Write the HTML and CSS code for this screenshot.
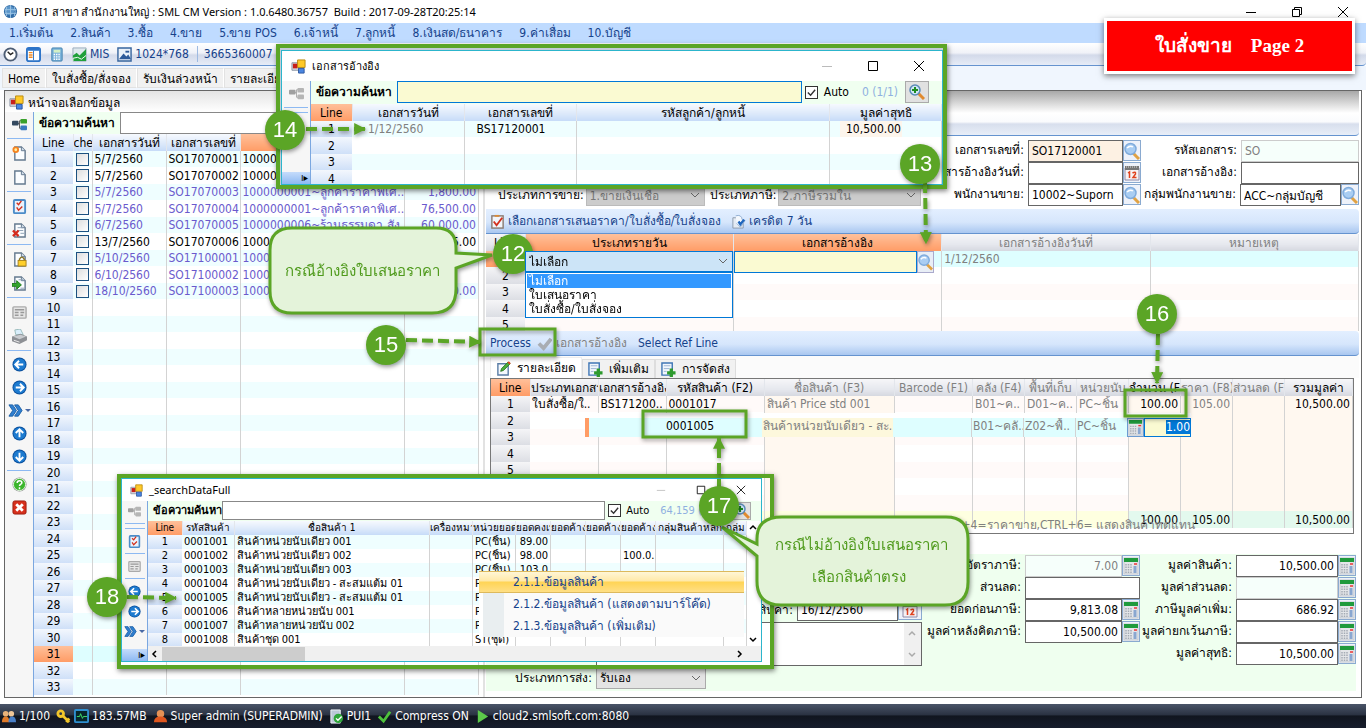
FILE: index.html
```html
<!doctype html>
<html lang="th">
  <head>
    <meta charset="UTF-8" />
    <meta name="viewport" content="width=device-width, initial-scale=1.0" />
    <title>SML CM - ใบสั่งขาย</title>
    <link rel="stylesheet" href="styles.css">
  </head>
  <body>
    <!-- icon sprite -->
    <svg class="sprite" width="0" height="0" aria-hidden="true">
      <symbol id="i-form" viewBox="0 0 16 16"><path d="M1 4h7v8H1z" fill="#d8dde6" stroke="#8a93a3"/><path d="M2 5h5v5H2z" fill="#c8201c"/><path d="M7 1h8v8H7z" fill="#ffc928" stroke="#b98a10"/><path d="M8 10h6v5H8z" fill="#4a86e0" stroke="#2c56a0"/></symbol>
      <symbol id="i-globe" viewBox="0 0 16 16"><circle cx="8" cy="8" r="7" fill="#2f6ba6"/><circle cx="7" cy="7" r="5" fill="#5b95c9"/><path d="M2 6h12M2 10h12M8 1v14M4 3q-2 5 0 10M12 3q2 5 0 10" stroke="#9cc4e4" fill="none"/></symbol>
      <symbol id="i-clock" viewBox="0 0 16 16"><circle cx="8" cy="8" r="6.5" fill="#fff" stroke="#4d5d74" stroke-width="2"/><path d="M5 5l3 3 3-2" stroke="#222" stroke-width="1.500" fill="none"/></symbol>
      <symbol id="i-layout" viewBox="0 0 16 16"><rect x="1" y="1" width="14" height="14" rx="2" fill="#fff" stroke="#2d74c8" stroke-width="2"/><path d="M2 3h12" stroke="#2d74c8" stroke-width="2"/><path d="M3 6h4M3 8.500h4M3 11h4" stroke="#f08a24" stroke-width="1.500"/><path d="M8 4v10" stroke="#2d74c8"/></symbol>
      <symbol id="i-calc" viewBox="0 0 16 16"><rect x="1" y="0" width="14" height="16" fill="#e4e6e9" stroke="#c3c8ce"/><path d="M1 0h14v4H1z" fill="#1f9a3c"/><path d="M3 6v9M5.500 6v9M8 6v9" stroke="#a4abb4" stroke-width="1.500" stroke-dasharray="1.500 1"/><path d="M12 8v7" stroke="#8aa7d0" stroke-width="3"/><path d="M11 6h3" stroke="#e33" stroke-width="1.500"/></symbol>
      <symbol id="i-calc2" viewBox="0 0 16 16"><rect x="3" y="1" width="11" height="14" rx="1" fill="#7fb5dc" stroke="#3c7eac"/><path d="M5 3h7v3H5z" fill="#d3f0c4"/><path d="M5 8h7M5 10.500h7M5 13h7" stroke="#fff" stroke-width="1.500" stroke-dasharray="1.500 1"/></symbol>
      <symbol id="i-chart" viewBox="0 0 16 16"><path d="M1 1h14v14H1z" fill="#dfe9ee" stroke="#9ab"/><path d="M1 15V9l4-3 3 3 7-7v13z" fill="#1fa03a"/><path d="M1 15v-3l5-1 4 2 5-4" fill="none" stroke="#fff"/></symbol>
      <symbol id="i-image" viewBox="0 0 16 16"><path d="M1 1h14v14H1z" fill="#eaf1fa" stroke="#37659e" stroke-width="1.500"/><path d="M2 13l5-6 3 3 2-2 3 5z" fill="#2d5a9a"/><path d="M9 4h4v2H9z" fill="#2d5a9a"/></symbol>
      <symbol id="i-share" viewBox="0 0 16 16"><path d="M5 7h3M8 4v8M8 4h2M8 12h2" stroke="#555" fill="none"/><rect x="0" y="4" width="7" height="5" rx="1" fill="#33495f"/><rect x="9" y="2" width="7" height="5" rx="1" fill="#3aa12c"/><rect x="9" y="9" width="7" height="5" rx="1" fill="#3a7ac0"/></symbol>
      <symbol id="i-share-off" viewBox="0 0 16 16"><path d="M5 7h3M8 4v8M8 4h2M8 12h2" stroke="#aaa" fill="none"/><rect x="0" y="4" width="7" height="5" rx="1" fill="#a0a0a0"/><rect x="9" y="2" width="7" height="5" rx="1" fill="#b5b5b5"/><rect x="9" y="9" width="7" height="5" rx="1" fill="#b5b5b5"/></symbol>
      <symbol id="i-page" viewBox="0 0 16 16"><path d="M3 1h7l4 4v10H3z" fill="#fbfdff" stroke="#64798f" stroke-width="1.500"/><path d="M10 1v4h4" fill="#d4dfea" stroke="#64798f"/></symbol>
      <symbol id="i-new" viewBox="0 0 16 16"><use href="#i-page"/><circle cx="4" cy="4" r="3.500" fill="#f58220"/><circle cx="4" cy="4" r="1.500" fill="#fff0a0"/></symbol>
      <symbol id="i-check" viewBox="0 0 16 16"><rect x="2" y="1" width="12" height="14" rx="1" fill="#e9f2fc" stroke="#4b8cc8" stroke-width="2"/><path d="M5 4l2 2 3-4M5 9l2 3 4-4" stroke="#d3301c" stroke-width="1.500" fill="none"/></symbol>
      <symbol id="i-del" viewBox="0 0 16 16"><use href="#i-page"/><path d="M6 5h6M6 8h6M9 11h4" stroke="#8da0b4"/><path d="M1 8l6 6M7 8l-6 6" stroke="#d52b1e" stroke-width="2.500"/></symbol>
      <symbol id="i-lock" viewBox="0 0 16 16"><use href="#i-page"/><path d="M8 9v-1.500q2.500-4 5 0V9" stroke="#8c7423" fill="none" stroke-width="1.500"/><rect x="6.500" y="9" width="8.500" height="6" fill="#ffd02b" stroke="#a8821a"/></symbol>
      <symbol id="i-go" viewBox="0 0 16 16"><use href="#i-page"/><path d="M7 4h5M9 13h4" stroke="#8da0b4"/><path d="M0 8h5V5l5 4.500-5 4.500v-3H0z" fill="#34a52d" stroke="#1f7a1a"/></symbol>
      <symbol id="i-props" viewBox="0 0 16 16"><rect x="1" y="2" width="14" height="12" rx="1" fill="#e6e6e6" stroke="#aaa" stroke-width="1.500"/><path d="M3 5h10M3 8h4M3 11h4M9 8h4M9 11h3" stroke="#999" stroke-width="1.500"/></symbol>
      <symbol id="i-print" viewBox="0 0 16 16"><path d="M3 1l6-1 3 6H4z" fill="#d9eefb" stroke="#9bb"/><path d="M0 8l9-3 7 3v4l-8 4-8-3z" fill="#8d9095"/><path d="M1 8l8-2 6 2-7 3z" fill="#c9ccd0"/><path d="M2 12l6 2" stroke="#eee"/></symbol>
      <symbol id="i-arrow" viewBox="0 0 16 16"><circle cx="8" cy="8" r="7.500" fill="#0b4f9c"/><circle cx="8" cy="8" r="6.500" fill="#1d7bd0"/><path d="M4 8h8M8.500 4L12.500 8l-4 4" stroke="#fff" stroke-width="2" fill="none"/></symbol>
      <symbol id="i-ff" viewBox="0 0 16 16"><path d="M1 2h4l4 6-4 6H1l4-6zM7 2h4l4 6-4 6H7l4-6z" fill="#2f7fd0" stroke="#1b5ea5"/></symbol>
      <symbol id="i-help" viewBox="0 0 16 16"><circle cx="8" cy="8" r="7.500" fill="#888"/><circle cx="8" cy="8" r="6.500" fill="#3cb52d" stroke="#e8ffe4"/><path d="M5.500 6.500q0-2.500 2.500-2.500t2.500 2q0 1-1.500 2-1 .6-1 1.500M8 11v2" stroke="#fff" stroke-width="1.600" fill="none"/></symbol>
      <symbol id="i-close" viewBox="0 0 16 16"><rect x="1" y="1" width="14" height="14" rx="2" fill="#d7301c" stroke="#9c1c0e"/><path d="M4.500 4.500l7 7M11.500 4.500l-7 7" stroke="#fff" stroke-width="3"/></symbol>
      <symbol id="i-mag" viewBox="0 0 16 16"><path d="M9 10l6 6" stroke="#e0a243" stroke-width="3"/><circle cx="6.500" cy="6" r="5.500" fill="#a9cdf2" stroke="#7fabdc" stroke-width="1.500"/><path d="M3 5q3-3 6-1" stroke="#fff" stroke-width="1.500" fill="none"/></symbol>
      <symbol id="i-magplus" viewBox="0 0 16 16"><path d="M9 9l6 6" stroke="#e08a2e" stroke-width="3"/><circle cx="6" cy="6" r="5" fill="#cfe6f7" stroke="#5a8ab8" stroke-width="1.500"/><path d="M6 3v6M3 6h6" stroke="#1d8c22" stroke-width="2"/></symbol>
      <symbol id="i-cal" viewBox="0 0 16 16"><path d="M1 3h14v12H1z" fill="#f7f2f4" stroke="#8e8aa8"/><path d="M1 1h14v4H1z" fill="#777"/><path d="M2 2h12" stroke="#ddd" stroke-dasharray="1 1"/><path d="M4 8l1.500-1v6M8.500 8q3.500-2 3 1L9 12.500h3.500" stroke="#e0421f" stroke-width="1.500" fill="none"/></symbol>
      <symbol id="i-pick" viewBox="0 0 16 16"><rect x="2" y="2" width="12" height="13" fill="#f2f5fa" stroke="#8a7a70" stroke-width="1.500"/><path d="M5 1h5v2H5z" fill="#d98b3a"/><path d="M4 8l3 4 6-8" stroke="#d3301c" stroke-width="2" fill="none"/></symbol>
      <symbol id="i-credit" viewBox="0 0 16 16"><path d="M2 4h8l3 4v7H2z" fill="#e4ebf4" stroke="#8c9aac"/><path d="M5 2q6-2 7 4l3 1-5 7-4-4" fill="#f4f8fd" stroke="#8cabd0"/><path d="M8 8l2 3 4-5" fill="none" stroke="#1f66bd" stroke-width="2.500"/></symbol>
      <symbol id="i-edit" viewBox="0 0 16 16"><path d="M2 3h11v12H2z" fill="#f4f8fd" stroke="#5b7ea6" stroke-width="1.500"/><path d="M5 11l1-3 7-7 2 2-7 7z" fill="#4cae3c" stroke="#2c7a22"/><path d="M13 1l2 2" stroke="#e0421f" stroke-width="2"/></symbol>
      <symbol id="i-add" viewBox="0 0 16 16"><path d="M1 1h11v13H1z" fill="#f1f6fc" stroke="#3f76b5" stroke-width="1.500"/><path d="M3 4h7M3 7h6M3 10h3" stroke="#9ab4d4"/><path d="M11 7v9M6.500 11.500h9" stroke="#2e9a2e" stroke-width="3.500"/></symbol>
      <symbol id="i-tick-off" viewBox="0 0 16 16"><path d="M2 8l5 5L15 3" stroke="#a9adb3" stroke-width="4" fill="none"/></symbol>
      <symbol id="i-users" viewBox="0 0 16 16"><circle cx="5" cy="5" r="3" fill="#e8b27a"/><path d="M1 14q0-6 4-6t4 6z" fill="#e07a28"/><circle cx="11" cy="5" r="3" fill="#f0c697"/><path d="M8 14q0-6 4-6t4 6z" fill="#4a80c8"/></symbol>
      <symbol id="i-user" viewBox="0 0 16 16"><circle cx="8" cy="5" r="4" fill="#e59155"/><path d="M1 14q0-6 7-6t7 6z" fill="#e0561e"/></symbol>
      <symbol id="i-key" viewBox="0 0 16 16"><circle cx="5" cy="5" r="3" fill="none" stroke="#f2c62a" stroke-width="3"/><path d="M7 7l7 7M11 14l3-4" stroke="#f2c62a" stroke-width="3"/></symbol>
      <symbol id="i-mon" viewBox="0 0 16 16"><rect x="1" y="1" width="14" height="13" rx="1" fill="#07262a" stroke="#2f8fd0" stroke-width="2"/><path d="M3 8h3l1-3 2 5 1-2h4" stroke="#3fe06a" fill="none"/></symbol>
      <symbol id="i-db" viewBox="0 0 16 16"><path d="M2 1h10v14H2z" fill="#bcc8d8" stroke="#f2f5fa"/><circle cx="10" cy="10" r="5" fill="#2fa53a"/><path d="M7.500 10l2 2 4-4" stroke="#fff" stroke-width="1.500" fill="none"/></symbol>
      <symbol id="i-tick" viewBox="0 0 16 16"><path d="M2 8l5 5L14 3" stroke="#4fc23c" stroke-width="3" fill="none"/></symbol>
      <symbol id="i-play" viewBox="0 0 16 16"><path d="M3 1l11 7-11 7z" fill="#5cc94a"/></symbol>
      <symbol id="i-min" viewBox="0 0 12 12"><path d="M1 6.500h10" stroke="currentColor"/></symbol>
      <symbol id="i-max" viewBox="0 0 12 12"><path d="M1.500 1.500h9v9h-9z" fill="none" stroke="currentColor"/></symbol>
      <symbol id="i-restore" viewBox="0 0 12 12"><path d="M1.500 3.500h7v7h-7zM3.500 3V1.500h7v7H9" fill="none" stroke="currentColor"/></symbol>
      <symbol id="i-x" viewBox="0 0 12 12"><path d="M1 1l10 10M11 1L1 11" stroke="currentColor"/></symbol>
      <symbol id="i-chev" viewBox="0 0 12 12"><path d="M3 4l3 3 3-3" fill="none" stroke="currentColor" stroke-width="1.500"/></symbol>
    </svg>

    <header class="title-bar">
      <svg class="icon"><use href="#i-globe"/></svg>
      <span>PUI1 สาขา สำนักงานใหญ่ : SML CM Version : 1.0.6480.36757 &nbsp;Build : 2017-09-28T20:25:14</span>
      <div class="win-buttons">
        <button title="Minimize"><svg><use href="#i-min"/></svg></button>
        <button title="Restore"><svg><use href="#i-restore"/></svg></button>
        <button title="Close"><svg><use href="#i-x"/></svg></button>
      </div>
    </header>

    <nav class="menu-bar">
      <a href="#">1.เริ่มต้น</a><a href="#">2.สินค้า</a><a href="#">3.ซื้อ</a><a href="#">4.ขาย</a><a href="#">5.ขาย POS</a><a href="#">6.เจ้าหนี้</a><a href="#">7.ลูกหนี้</a><a href="#">8.เงินสด/ธนาคาร</a><a href="#">9.ค่าเสื่อม</a><a href="#">10.บัญชี</a>
    </nav>

    <div class="main-tools">
      <button title="Clock"><svg class="icon"><use href="#i-clock"/></svg></button>
      <button title="Layout"><svg class="icon"><use href="#i-layout"/></svg></button>
      <button title="Calculator"><svg class="icon"><use href="#i-calc2"/></svg></button>
      <button><svg class="icon"><use href="#i-chart"/></svg>MIS</button>
      <button><svg class="icon"><use href="#i-image"/></svg>1024*768</button>
      <span class="code">3665360007</span>
      <span>POS Changsiam Call Center Code : 3665360007-001(สำนักงานใหญ่)</span>
    </div>

    <nav class="doc-tabs">
      <a href="#">Home</a><a href="#">ใบสั่งซื้อ/สั่งจอง</a><a href="#">รับเงินล่วงหน้า</a><a href="#">รายละเอียด</a>
    </nav>

    <main class="workspace">
      <section class="list-pane">
        <div class="pane-title"><svg class="icon"><use href="#i-form"/></svg>หน้าจอเลือกข้อมูล</div>
        <div class="pane-body">
          <div class="side-tools">
            <button title="Link"><svg class="icon"><use href="#i-share"/></svg></button>
            <hr>
            <button title="New"><svg class="icon"><use href="#i-new"/></svg></button>
            <button title="Blank"><svg class="icon"><use href="#i-page"/></svg></button>
            <hr>
            <button title="Select"><svg class="icon"><use href="#i-check"/></svg></button>
            <button title="Delete"><svg class="icon"><use href="#i-del"/></svg></button>
            <hr>
            <button title="Lock"><svg class="icon"><use href="#i-lock"/></svg></button>
            <button title="Import"><svg class="icon"><use href="#i-go"/></svg></button>
            <hr>
            <button title="Properties"><svg class="icon"><use href="#i-props"/></svg></button>
            <button title="Print"><svg class="icon"><use href="#i-print"/></svg></button>
            <hr>
            <button class="nav" title="Previous"><svg class="icon left"><use href="#i-arrow"/></svg></button>
            <button class="nav" title="Next"><svg class="icon"><use href="#i-arrow"/></svg></button>
            <button class="nav drop" title="Skip"><svg class="icon"><use href="#i-ff"/></svg></button>
            <button class="nav" title="Up"><svg class="icon up"><use href="#i-arrow"/></svg></button>
            <button class="nav" title="Down"><svg class="icon down"><use href="#i-arrow"/></svg></button>
            <hr>
            <button class="nav" title="Help"><svg class="icon"><use href="#i-help"/></svg></button>
            <button class="nav" title="Exit"><svg class="icon"><use href="#i-close"/></svg></button>
          </div>
          <div class="list-main">
            <div class="search-row"><label for="list-search">ข้อความค้นหา</label><input type="text" id="list-search"></div>
            <table class="grid list-grid">
              <colgroup><col class="w39"><col class="w19"><col class="w74"><col class="w74"><col><col class="w74"></colgroup>
              <thead><tr><th>Line</th><th>che</th><th>เอกสารวันที่</th><th>เอกสารเลขที่</th><th class="hot"></th><th></th></tr></thead>
              <tbody id="list-rows"></tbody>
            </table>
          </div>
        </div>
      </section>

      <section class="doc-pane">
        <div class="doc-head"></div>
        <form class="doc-form">
          <div class="sale-type">
            <label for="sale-type">ประเภทการขาย:</label><select id="sale-type" disabled><option>1.ขายเงินเชื่อ</option></select>
            <label for="tax-type">ประเภทภาษี:</label><select id="tax-type" disabled><option>2.ภาษีรวมใน</option></select>
          </div>
          <div class="fields doc-fields">
            <div class="field"><label for="doc-no">เอกสารเลขที่:</label><input class="required" type="text" id="doc-no" value="SO17120001"><button type="button" title="ค้นหา"><svg><use href="#i-mag"/></svg></button></div>
            <div class="field"><label for="ref-date">เอกสารอ้างอิงวันที่:</label><input type="text" id="ref-date"><button type="button" title="วันที่"><svg><use href="#i-cal"/></svg></button></div>
            <div class="field"><label for="seller">พนักงานขาย:</label><input type="text" id="seller" value="10002~Suporn"><button type="button" title="ค้นหา"><svg><use href="#i-mag"/></svg></button></div>
          </div>
          <div class="fields code-fields">
            <div class="field"><label for="doc-code">รหัสเอกสาร:</label><input type="text" id="doc-code" value="SO" disabled></div>
            <div class="field"><label for="doc-ref">เอกสารอ้างอิง:</label><input type="text" id="doc-ref"></div>
            <div class="field"><label for="seller-group">กลุ่มพนักงานขาย:</label><input type="text" id="seller-group" value="ACC~กลุ่มบัญชี"><button type="button" title="ค้นหา"><svg><use href="#i-mag"/></svg></button></div>
          </div>
        </form>

        <div class="blue-bar">
          <button><svg class="icon"><use href="#i-pick"/></svg>เลือกเอกสารเสนอราคา/ใบสั่งซื้อ/ใบสั่งจอง</button>
          <button><svg class="icon"><use href="#i-credit"/></svg>เครดิต 7 วัน</button>
        </div>

        <div class="ref-wrap">
          <table class="grid gray ref-grid">
            <colgroup><col class="w39"><col><col><col><col></colgroup>
            <thead><tr><th>Line</th><th class="hot">ประเภทรายวัน</th><th class="hot">เอกสารอ้างอิง</th><th class="dim">เอกสารอ้างอิงวันที่</th><th class="dim">หมายเหตุ</th></tr></thead>
            <tbody>
              <tr class="current"><td>1</td>
                <td><div class="cell-combo">
                  <select aria-label="ประเภทรายวัน"><option>ไม่เลือก</option></select>
                  <ul><li class="on">ไม่เลือก</li><li>ใบเสนอราคา</li><li>ใบสั่งซื้อ/ใบสั่งจอง</li></ul>
                </div></td>
                <td><div class="cell-input"><input type="text" aria-label="เอกสารอ้างอิง"><button title="ค้นหา"><svg><use href="#i-mag"/></svg></button></div></td>
                <td class="dim">1/12/2560</td><td></td></tr>
              <tr><td>2</td><td></td><td></td><td></td><td></td></tr>
              <tr><td>3</td><td></td><td></td><td></td><td></td></tr>
              <tr><td>4</td><td></td><td></td><td></td><td></td></tr>
              <tr><td>5</td><td></td><td></td><td></td><td></td></tr>
            </tbody>
          </table>
        </div>

        <div class="blue-bar process-bar">
          <button>Process</button>
          <button class="off" disabled><svg class="icon"><use href="#i-tick-off"/></svg>เอกสารอ้างอิง</button>
          <button>Select Ref Line</button>
        </div>

        <div class="detail-tabs">
          <button class="active"><svg class="icon"><use href="#i-edit"/></svg>รายละเอียด</button>
          <button><svg class="icon"><use href="#i-add"/></svg>เพิ่มเติม</button>
          <button><svg class="icon"><use href="#i-add"/></svg>การจัดส่ง</button>
        </div>

        <div class="detail-wrap">
          <table class="grid gray detail-grid">
            <colgroup><col class="w39"><col class="w68"><col class="w68"><col class="w98"><col><col class="w78"><col class="w52"><col class="w52"><col class="w52"><col class="w52"><col class="w52"><col class="w52"><col class="w68"></colgroup>
            <thead><tr><th class="hot">Line</th><th>ประเภทเอกสาร</th><th>เอกสารอ้างอิง</th><th>รหัสสินค้า (F2)</th><th class="dim">ชื่อสินค้า (F3)</th><th class="dim">Barcode (F1)</th><th class="dim">คลัง (F4)</th><th class="dim">พื้นที่เก็บ</th><th class="dim">หน่วยนับ</th><th>จำนวน (F7)</th><th class="dim">ราคา (F8)</th><th class="dim">ส่วนลด (F9)</th><th>รวมมูลค่า</th></tr></thead>
            <tbody id="detail-rows"></tbody>
          </table>
          <div class="grid-hint">CTRL+4=ราคาขาย,CTRL+6= แสดงสินค้าทดแทน</div>
          <!-- row being edited sits over rows 2-3 -->
          <div class="edit-row">
            <span class="mark"></span><span class="gap"></span><span class="item">0001005</span><span class="name">สินค้าหน่วยนับเดียว - สะ..</span><span class="barcode"></span><span class="short">B01~คลั..</span><span class="short">Z02~พื้..</span><span class="short">PC~ชิ้น</span>
            <button title="คำนวณ"><svg><use href="#i-calc"/></svg></button><span class="qty"><mark>1.00</mark></span>
          </div>
        </div>

        <form class="sum-form">
          <div class="ship">
            <label class="l-date" for="ship-date">วันที่ส่งสินค้า:</label>
            <div class="field ship-date"><input type="text" id="ship-date" value="16/12/2560"><button type="button" title="วันที่"><svg><use href="#i-cal"/></svg></button></div>
            <label class="l-note" for="note">หมายเหตุ:</label>
            <div class="note"><textarea id="note"></textarea><span class="note-scroll"><svg class="up-chev"><use href="#i-chev"/></svg><svg><use href="#i-chev"/></svg></span></div>
            <label class="l-type" for="ship-type">ประเภทการส่ง:</label>
            <select id="ship-type"><option>รับเอง</option></select>
          </div>
          <div class="fields tax-fields">
            <div class="field"><label for="vat">อัตราภาษี:</label><input type="text" id="vat" value="7.00" disabled><button type="button" title="คำนวณ"><svg><use href="#i-calc"/></svg></button></div>
            <div class="field"><label for="discount">ส่วนลด:</label><input type="text" id="discount"></div>
            <div class="field"><label for="before">ยอดก่อนภาษี:</label><input type="text" id="before" value="9,813.08"><button type="button" title="คำนวณ"><svg><use href="#i-calc"/></svg></button></div>
            <div class="field"><label for="after">มูลค่าหลังคิดภาษี:</label><input type="text" id="after" value="10,500.00"><button type="button" title="คำนวณ"><svg><use href="#i-calc"/></svg></button></div>
          </div>
          <div class="fields total-fields">
            <div class="field"><label for="t1">มูลค่าสินค้า:</label><input type="text" id="t1" value="10,500.00"><button type="button" title="คำนวณ"><svg><use href="#i-calc"/></svg></button></div>
            <div class="field"><label for="t2">มูลค่าส่วนลด:</label><input type="text" id="t2" disabled><button type="button" title="คำนวณ"><svg><use href="#i-calc"/></svg></button></div>
            <div class="field"><label for="t3">ภาษีมูลค่าเพิ่ม:</label><input type="text" id="t3" value="686.92"><button type="button" title="คำนวณ"><svg><use href="#i-calc"/></svg></button></div>
            <div class="field"><label for="t4">มูลค่ายกเว้นภาษี:</label><input type="text" id="t4"><button type="button" title="คำนวณ"><svg><use href="#i-calc"/></svg></button></div>
            <div class="field"><label for="t5">มูลค่าสุทธิ:</label><input type="text" id="t5" value="10,500.00"><button type="button" title="คำนวณ"><svg><use href="#i-calc"/></svg></button></div>
          </div>
        </form>
      </section>
    </main>

    <footer class="status-bar">
      <span><svg class="icon"><use href="#i-users"/></svg>1/100</span>
      <span><svg class="icon"><use href="#i-key"/></svg><svg class="icon"><use href="#i-mon"/></svg>183.57MB</span>
      <span><svg class="icon"><use href="#i-user"/></svg>Super admin (SUPERADMIN)</span>
      <span><svg class="icon"><use href="#i-db"/></svg>PUI1</span>
      <span><svg class="icon"><use href="#i-tick"/></svg>Compress ON</span>
      <span><svg class="icon"><use href="#i-play"/></svg>cloud2.smlsoft.com:8080</span>
    </footer>

    <!-- reference document window -->
    <div class="frame frame-ref">
      <div class="window">
        <div class="window-title"><svg class="icon"><use href="#i-form"/></svg>เอกสารอ้างอิง
          <div class="win-buttons"><button class="off" title="Minimize"><svg><use href="#i-min"/></svg></button><button title="Maximize"><svg><use href="#i-max"/></svg></button><button title="Close"><svg><use href="#i-x"/></svg></button></div>
        </div>
        <div class="pane-body">
          <div class="side-tools"><button title="Link"><svg class="icon"><use href="#i-share-off"/></svg></button><hr><hr><span class="grow"></span><span class="more">ı▸</span></div>
          <div class="list-main">
            <div class="search-row"><label for="ref-search">ข้อความค้นหา</label><input class="focus" type="text" id="ref-search" autofocus><input type="checkbox" id="ref-auto" checked><label class="auto" for="ref-auto">Auto</label><span class="pages">0 (1/1)</span><button title="ค้นหา"><svg><use href="#i-magplus"/></svg></button></div>
            <table class="grid">
              <colgroup><col class="w41"><col class="w112"><col class="w112"><col><col class="w112"></colgroup>
              <thead><tr><th class="hot">Line</th><th>เอกสารวันที่</th><th>เอกสารเลขที่</th><th>รหัสลูกค้า/ลูกหนี้</th><th>มูลค่าสุทธิ</th></tr></thead>
              <tbody>
                <tr><td>1</td><td class="dim date">1/12/2560</td><td class="pad">BS17120001</td><td></td><td class="amount"><span>10,500.00</span></td></tr>
                <tr><td>2</td><td></td><td></td><td></td><td></td></tr>
                <tr><td>3</td><td></td><td></td><td></td><td></td></tr>
                <tr><td>4</td><td></td><td></td><td></td><td></td></tr>
              </tbody>
            </table>
          </div>
        </div>
      </div>
    </div>

    <!-- item search window -->
    <div class="frame frame-item">
      <div class="window">
        <div class="window-title"><svg class="icon"><use href="#i-form"/></svg>_searchDataFull
          <div class="win-buttons"><button class="off" title="Minimize"><svg><use href="#i-min"/></svg></button><button title="Maximize"><svg><use href="#i-max"/></svg></button><button title="Close"><svg><use href="#i-x"/></svg></button></div>
        </div>
        <div class="pane-body">
          <div class="side-tools">
            <button title="Link"><svg class="icon"><use href="#i-share-off"/></svg></button><hr><hr>
            <button title="Select"><svg class="icon"><use href="#i-check"/></svg></button><hr>
            <button title="Properties"><svg class="icon"><use href="#i-props"/></svg></button><hr>
            <button title="Previous"><svg class="icon left"><use href="#i-arrow"/></svg></button>
            <button title="Next"><svg class="icon"><use href="#i-arrow"/></svg></button>
            <button class="drop" title="Skip"><svg class="icon"><use href="#i-ff"/></svg></button>
            <span class="grow"></span><span class="more">ı▸</span>
          </div>
          <div class="list-main">
            <div class="search-row"><label for="item-search">ข้อความค้นหา</label><input type="text" id="item-search"><input type="checkbox" id="item-auto" checked><label class="auto" for="item-auto">Auto</label><span class="pages">64,159 (1/11)</span><button title="ค้นหา"><svg><use href="#i-magplus"/></svg></button></div>
            <div class="item-scroll">
              <table class="grid item-grid">
                <colgroup><col class="w34"><col class="w52"><col><col class="w43"><col class="w43"><col class="w35"><col class="w35"><col class="w35"><col class="w35"><col class="w68"><col class="w23"></colgroup>
                <thead><tr><th class="hot">Line</th><th>รหัสสินค้า</th><th>ชื่อสินค้า 1</th><th>เครื่องหมาย</th><th>หน่วยยอด</th><th>ยอดคงเหลือ</th><th>ยอดค้างรับ</th><th>ยอดค้างส่ง</th><th>ยอดค้างจอง</th><th>กลุ่มสินค้าหลัก</th><th>กลุ่ม</th></tr></thead>
                <tbody id="item-rows"></tbody>
              </table>
              <div class="v-scroll"><svg class="up-chev"><use href="#i-chev"/></svg><svg><use href="#i-chev"/></svg></div>
            </div>
            <div class="h-scroll"><svg class="left-chev"><use href="#i-chev"/></svg><span></span><svg class="right-chev"><use href="#i-chev"/></svg></div>
          </div>
        </div>
      </div>
      <div class="context-menu">
        <a class="on" href="#">2.1.1.ข้อมูลสินค้า</a>
        <a href="#">2.1.2.ข้อมูลสินค้า (แสดงตามบาร์โค๊ด)</a>
        <a href="#">2.1.3.ข้อมูลสินค้า (เพิ่มเติม)</a>
      </div>
    </div>

    <div class="banner">ใบสั่งขาย &nbsp;&nbsp; Page 2</div>

    <!-- step markers drawn over the screen -->
    <svg class="steps" width="1366" height="728" viewBox="0 0 1366 728">
      <defs>
        <marker id="head" viewBox="0 0 10 10" refX="9" refY="5" markerWidth="12" markerHeight="12" markerUnits="userSpaceOnUse" orient="auto"><path d="M0 0l10 5-10 5z" fill="#5ba526"/></marker>
      </defs>
      <g class="boxes">
        <rect x="480" y="329" width="75" height="26"/>
        <rect x="643" y="411" width="103" height="26"/>
        <rect x="1125" y="390" width="61" height="26"/>
      </g>
      <g class="bubbles">
        <path d="M292 228h144q20 0 20 20v5l36 2-36 13v21q0 24-24 24H292q-22 0-22-22v-41q0-22 22-22z"/>
        <path d="M782 517h164q22 0 22 22v43q0 23-23 23H781q-24 0-24-24v-25l-35-29 35 17v-5q0-22 25-22z"/>
      </g>
      <g class="arrows">
        <path d="M306 129h59"/><path d="M925 182l1 61"/><path d="M406 340l74 2"/><path d="M1158 334l-1 49"/><path d="M719 490v-52"/><path d="M127 597l49 1"/>
      </g>
      <g class="circles">
        <circle cx="513" cy="254" r="20"/><circle cx="920" cy="164" r="20"/><circle cx="285" cy="130" r="20"/><circle cx="386" cy="345" r="20"/><circle cx="1157" cy="314" r="20"/><circle cx="719" cy="506" r="20"/><circle cx="107" cy="597" r="20"/>
      </g>
      <g class="numbers">
        <text x="513" y="261">12</text><text x="920" y="171">13</text><text x="285" y="137">14</text><text x="386" y="352">15</text><text x="1157" y="321">16</text><text x="719" y="513">17</text><text x="107" y="604">18</text>
      </g>
      <g class="notes">
        <text x="362" y="276">กรณีอ้างอิงใบเสนอราคา</text>
        <text x="861" y="550">กรณีไม่อ้างอิงใบเสนอราคา</text>
        <text x="859" y="582">เลือกสินค้าตรง</text>
      </g>
    </svg>

    <script src="script.js"></script>
  </body>
</html>
```
FILE: styles.css
```css
:root {
  --ink: #15428b; --line: #d3d3d3; --green: #5ba526; --stripe: #effeff;
  --blue-line: #6593cf; --hot: linear-gradient(#ffc09a, #ff9c66);
  --head: linear-gradient(#f6f9fe, #dbe8fa 60%, #c6dbf8);
  --head-gray: linear-gradient(#f6f6f8, #e6e8ee 60%, #d5d8e0);
}
* { box-sizing: border-box; }
html, body { margin: 0; padding: 0; }
body { position: relative; min-height: 100vh; display: flex; flex-direction: column; overflow: hidden; background: #fff; color: #000; font: 12px/16px "DejaVu Sans Condensed", "Noto Sans", sans-serif; }
button, input, select, textarea { font: inherit; color: inherit; margin: 0; border-radius: 0; }
button { display: flex; align-items: center; gap: 3px; padding: 0; border: 0; background: none; white-space: nowrap; }
a { color: inherit; text-decoration: none; }
label { white-space: nowrap; }
.sprite { position: absolute; }
.icon { width: 15px; height: 15px; flex: none; display: block; }
.left { transform: rotate(180deg); }
.up { transform: rotate(-90deg); }
.down { transform: rotate(90deg); }

/* window chrome */
.title-bar { display: flex; align-items: center; gap: 6px; height: 23px; padding-left: 3px; font-family: "Noto Sans", sans-serif; font-size: 11px; }
.win-buttons { margin-left: auto; display: flex; }
.win-buttons button { width: 46px; height: 20px; justify-content: center; }
.win-buttons svg { width: 12px; height: 12px; }
.win-buttons .off { color: #bbb; }
.menu-bar { display: flex; align-items: center; gap: 17px; height: 20px; padding-left: 9px; background: #bfdbff; color: var(--ink); }
.main-tools { display: flex; align-items: center; gap: 8px; height: 23px; padding: 0 3px; background: linear-gradient(#fff, #f0f2f8 45%, #d3daea 55%, #e6ecf7); border-bottom: 1px solid var(--blue-line); border-radius: 0 0 4px 0; color: var(--ink); }
.main-tools .code { padding-left: 6px; border-left: 1px solid #9ebae1; }
.doc-tabs { display: flex; height: 24px; padding: 2px 2px 0; background: #f0f6fe; }
.doc-tabs a { height: 20px; padding: 2px 5px 0; background: #f1f1f1; border: 1px solid #e2e2e2; border-right-color: #fff; }

/* workspace */
.workspace { display: flex; flex: 1; margin: 0 4px 6px; border: 1px solid #666; }
.list-pane { width: 474px; display: flex; flex-direction: column; }
.pane-title { display: flex; align-items: center; gap: 4px; height: 21px; padding: 2px 4px 0; background: linear-gradient(#e4e4e4, #fff); }
.pane-body { display: flex; flex: 1; min-height: 0; }
.side-tools { width: 29px; display: flex; flex-direction: column; background: #f6f6f6; border-right: 1px solid #7ba7e0; }
.side-tools button { height: 24px; justify-content: center; }
.side-tools button.nav { height: 23px; }
.side-tools hr { width: 24px; height: 1px; margin: 2px auto; border: 0; background: #8db9f2; }
.side-tools .drop { gap: 2px; }
.side-tools .drop::after { content: ""; border: 3px solid transparent; border-top-color: #4a6aa5; border-bottom: 0; }
.side-tools .grow { flex: 1; }
.side-tools .more { height: 12px; line-height: 11px; padding-right: 2px; text-align: right; font-size: 10px; background: linear-gradient(#c5dcfb, #8db9f2); }
.list-main { flex: 1; min-width: 0; display: flex; flex-direction: column; }
.search-row { display: flex; align-items: center; height: 22px; padding-left: 5px; background: #f0fff0; }
.search-row label { width: 81px; font-weight: bold; }
.search-row input[type="text"] { flex: 1; min-width: 0; height: 22px; padding: 0 2px; border: 1px solid #888; background: #fff; outline: 0; }

/* grids */
.grid { width: 100%; border-collapse: collapse; table-layout: fixed; }
.grid th { height: 17px; padding: 0; overflow: hidden; white-space: nowrap; font-weight: normal; background: var(--head); border-right: 1px solid #e3e6ec; }
.grid td { height: 16px; padding: 0 2px; overflow: hidden; white-space: nowrap; border-right: 1px solid var(--line); }
.grid tbody tr:nth-child(even) td { height: 17px; }
.grid tbody tr:nth-child(odd) td { background: var(--stripe); }
.grid tbody td:first-child, .grid tbody tr:nth-child(odd) td:first-child { padding: 0; text-align: center; background: linear-gradient(#f3f7fd, #cfe0f8); border-right: 0; }
.grid.gray th { background: var(--head-gray); }
.grid.gray tbody tr:nth-child(odd) td { background: #fffaf9; }
.grid.gray tbody td:first-child, .grid.gray tbody tr:nth-child(odd) td:first-child { background: linear-gradient(#f5f5f7, #dcdee4); }
.grid .hot, .grid.gray .hot, .grid tbody .hot td:first-child { background: var(--hot); }
.grid .dim { color: #808080; }
.grid .num { text-align: right; }
.w19 { width: 19px; } .w23 { width: 23px; } .w34 { width: 34px; } .w35 { width: 35px; } .w39 { width: 39px; }
.w41 { width: 41px; } .w43 { width: 43px; } .w52 { width: 52px; } .w68 { width: 68px; } .w74 { width: 74px; }
.w78 { width: 78px; } .w98 { width: 98px; } .w112 { width: 112px; }
.list-grid .posted td { color: #6a5acd; }
.list-grid .posted td:first-child { color: #000; }
.grid.list-grid tbody .hot td { background: #defeff; }
.grid.list-grid tbody tr.hot td:first-child { background: var(--hot); }
.list-grid input { appearance: none; display: block; width: 13px; height: 13px; margin: 0 auto; border: 1px solid #1c5180; background: linear-gradient(135deg, #ddd, #fff); }

/* document pane */
.doc-pane { flex: 1; min-width: 0; display: flex; flex-direction: column; margin-left: 4px; padding: 0 2px 0 1px; border-left: 2px solid #e2e2e2; }
.doc-head { height: 45px; background: linear-gradient(#a8a8a8, #fff 50%, #fafbfd 70%, #d8dfed 75%, #e8eef8); border-bottom: 1px solid var(--blue-line); border-radius: 0 0 4px 0; }
.doc-form { display: flex; height: 73px; padding-top: 4px; }
.sale-type { flex: 1; display: flex; align-items: flex-end; gap: 2px; padding: 0 0 3px 12px; }
.sale-type label { line-height: 21px; }
select { appearance: none; padding: 0 3px; border: 1px solid #aaa; background: #e4e4e4 url("data:image/svg+xml,%3Csvg xmlns='http://www.w3.org/2000/svg' viewBox='0 0 8 5'%3E%3Cpath d='M0 0l4 4 4-4' fill='none' stroke='%23666'/%3E%3C/svg%3E") no-repeat right 5px center / 8px 5px; }
.sale-type select { width: 119px; height: 21px; border-color: #bbb; background-color: #ccc; color: #777; opacity: 1; }
#tax-type { width: 143px; }
#sale-type { margin-right: 3px; }
.field { display: flex; height: 22px; }
.field label { flex: 1; min-width: 0; display: flex; justify-content: flex-end; padding-right: 4px; line-height: 20px; }
.field input { flex: none; height: 22px; padding: 0 3px; border: 1px solid #666; background: #fff; }
.field input:disabled { border-color: #ccc; background: #f6fffb; color: #808080; }
.field input.required { background: #fdf1e3; }
.field button { width: 18px; height: 21px; flex: none; justify-content: center; border: 1px solid #8aaad0; background: #eef2fa; }
.field button svg { width: 16px; height: 18px; }
.doc-fields { width: 197px; }
.doc-fields input { width: 95px; }
.code-fields { width: 218px; }
.code-fields input { width: 118px; }
.code-fields #seller-group { width: 101px; }
.blue-bar { display: flex; align-items: center; gap: 10px; height: 25px; padding-left: 4px; background: linear-gradient(#e3efff, #d6e6fc 55%, #a9c7f0); border-bottom: 1px solid var(--blue-line); border-radius: 0 4px 4px 0; color: var(--ink); }
.ref-wrap { height: 97px; overflow: hidden; }
.ref-grid .current td { background: #defeff !important; }
.ref-grid .current td:first-child { background: var(--hot) !important; }
.ref-grid td { overflow: visible; padding: 0; }
.ref-grid td.dim { padding-left: 2px; }
.cell-combo, .cell-input { position: relative; z-index: 1; height: 16px; }
.cell-combo select { display: block; width: 100%; height: 21px; background-color: #cce4f7; border-color: #0078d7; }
.cell-combo ul { margin: 0; padding: 1px; list-style: none; background: #fff; border: 1px solid #0078d7; line-height: 14px; }
.cell-combo li { padding-left: 2px; }
.cell-combo .on { background: #3399ff; color: #fff; }
.cell-input { display: flex; width: 200px; }
.cell-input input { flex: 1; min-width: 0; height: 22px; border: 1px solid #0078d7; background: #fafad2; }
.cell-input button { width: 17px; height: 22px; justify-content: center; background: #e8eef6; border: 1px solid #aac; }
.cell-input svg { width: 15px; height: 18px; }
.process-bar { gap: 6px; }
.process-bar .off { gap: 4px; color: #808080; }
.process-bar button:last-child { margin-left: 5px; }
.detail-tabs { display: flex; align-items: flex-end; height: 22px; padding-left: 4px; background: #fbfbfb; }
.detail-tabs button { height: 19px; gap: 6px; padding: 0 5px; background: #f1f1f1; border: 1px solid #ddd; border-bottom: 0; }
.detail-tabs .active { height: 21px; gap: 6px; background: #fff; border-color: #eee; }
.detail-wrap { position: relative; height: 156px; margin: 0 5px 0 4px; border: 1px solid #777; }
.detail-grid .beige { background: #fff8f0 !important; }
.detail-grid tr.total td { background: #feffe0 !important; }
.detail-grid tr.total td:nth-child(n+10) { background: #e3f9ee !important; }
.grid-hint { position: absolute; right: 158px; bottom: 0; color: #808080; }
.edit-row { position: absolute; left: 94px; top: 34px; display: flex; align-items: stretch; height: 24px; padding: 5px 0 0; background: #fff; }
.edit-row span { background: #defeff; overflow: hidden; white-space: nowrap; color: #808080; padding-left: 1px; }
.edit-row .mark { width: 4px; background: #ff9c66; }
.edit-row .gap { width: 76px; }
.edit-row .item { width: 97px; color: #000; }
.edit-row .name { width: 131px; background: #fdf8dc; }
.edit-row .barcode { width: 78px; }
.edit-row .short { width: 52px; border-left: 1px solid var(--line); }
.edit-row button { width: 17px; justify-content: center; background: #dfe6ee; border: 1px solid #6b9bd1; }
.edit-row button svg { width: 15px; height: 17px; }
.edit-row .qty { width: 47px; text-align: right; background: #fafad2; border: 1px solid #0078d7; }
.edit-row mark { background: #0078d7; color: #fff; }

.sum-form { display: flex; margin: 20px 3px 6px 0; height: 137px; background: #efffef; }
.sum-form .fields { padding-top: 1px; }
.sum-form .fields input { text-align: right; }
.ship { flex: 1; display: grid; grid-template-columns: 106px 110px 83px 125px; grid-template-rows: 45px 22px 46px 22px; column-gap: 4px; align-items: center; }
.ship label { text-align: right; }
.l-date { grid-area: 2 / 2 / 3 / 4; }
.ship-date { grid-area: 2 / 4 / 3 / 5; }
.ship-date input { width: 101px; }
.ship-date button { width: 24px; }
.l-note { grid-area: 3 / 1 / 4 / 2; }
.note { grid-area: 3 / 2 / 4 / 5; display: flex; height: 44px; border: 1px solid #666; background: #fff; }
.note textarea { flex: 1; border: 0; resize: none; }
.note-scroll { display: flex; flex-direction: column; justify-content: space-between; width: 17px; padding: 4px 2px; background: #f0f0f0; color: #aaa; }
.l-type { grid-area: 4 / 1 / 5 / 2; }
#ship-type { grid-area: 4 / 2 / 5 / 3; height: 21px; }
.note-scroll svg, .v-scroll svg, .h-scroll svg { width: 12px; height: 12px; display: block; }
.up-chev { transform: rotate(180deg); }
.left-chev { transform: rotate(90deg); }
.right-chev { transform: rotate(-90deg); }
.tax-fields { width: 214px; }
.tax-fields input { width: 97px; }
.tax-fields #discount { width: 115px; }
.total-fields { width: 216px; }
.total-fields input { width: 102px; }

.status-bar { display: flex; align-items: center; gap: 6px; height: 24px; padding-left: 1px; background: linear-gradient(#4a5468, #2a3242 45%, #10151f 50%, #161d2c); color: #fff; }
.status-bar span { display: flex; align-items: center; gap: 3px; }

/* floating windows */
.frame { position: absolute; padding: 2px 0 0 1px; border: 4px solid var(--green); box-shadow: 1px 2px 5px rgba(0, 0, 0, .5); }
.frame-ref { left: 276px; top: 44px; width: 671px; height: 145px; background: #c4cbd6; }
.frame-item { left: 117px; top: 474px; width: 657px; height: 195px; padding: 0 8px 3px 0; font-size: 11px; }
.window { display: flex; flex-direction: column; height: 100%; background: #fff; border: 1px solid #2cb5cc; overflow: hidden; }
.window-title { display: flex; align-items: center; gap: 6px; height: 30px; flex: none; padding-left: 9px; font-family: "Noto Sans", sans-serif; font-size: 11px; }
.frame .search-row label.auto { width: auto; padding: 0 13px 0 6px; font-weight: normal; }
.search-row input.focus { background: #fafad2; border-color: #0078d7; }
.search-row input[type="checkbox"] { appearance: none; width: 13px; height: 13px; margin-left: 3px; border: 1px solid #333; background: #fff; }
.search-row input[type="checkbox"]:checked { background: #fff url("data:image/svg+xml,%3Csvg xmlns='http://www.w3.org/2000/svg' viewBox='0 0 12 12'%3E%3Cpath d='M2 6l3 3 5-6' fill='none' stroke='%23333' stroke-width='1.500'/%3E%3C/svg%3E"); }
.search-row .pages { color: #8fb0e0; }
.search-row button { width: 24px; height: 22px; margin: 0 13px 0 7px; justify-content: center; background: #e1e1e1; border: 1px solid #aaa; }
.search-row button svg { width: 16px; height: 16px; }
.frame-ref .search-row { height: 24px; padding-bottom: 1px; }
.frame-ref td.date { padding-left: 16px; }
.frame-ref td.pad { padding-left: 12px; }
.frame-ref td.amount { padding: 0 0 0 10px; }
.frame-ref td.amount span { display: inline-block; padding: 0 1px 0 6px; background: #fdf5ec; }
.frame-item .window-title { height: 22px; padding-left: 8px; }
.frame-item .window-title .icon { width: 13px; }
.frame-item .window-title .win-buttons button { width: 40px; }
.frame-item .win-buttons svg { width: 10px; height: 10px; }
.frame-item .side-tools { width: 26px; }
.frame-item .side-tools button { height: 20px; }
.frame-item .side-tools .icon { width: 13px; height: 13px; }
.frame-item .side-tools hr { width: 20px; }
.frame-item .search-row { height: 20px; }
.frame-item .search-row label { width: 69px; }
.frame-item .search-row input[type="text"] { height: 19px; }
.frame-item .search-row button { width: 19px; height: 18px; margin: 0 10px 0 4px; }
.frame-item .search-row label.auto { padding: 0 11px 0 5px; }
.item-scroll { display: flex; height: 126px; overflow: hidden; }
.item-scroll .item-grid { flex: 1; width: 0; }
.item-grid th { height: 14px; line-height: 14px; font-size: 10px; }
.item-grid td, .item-grid tbody tr:nth-child(even) td { height: 14px; line-height: 14px; }
.v-scroll { display: flex; flex-direction: column; justify-content: space-between; width: 14px; background: #fff; }
.h-scroll { display: flex; align-items: center; height: 15px; background: #f0f0f0; }
.h-scroll span { width: 143px; height: 14px; margin: 0 auto 0 2px; background: #cdcdcd; }
.h-scroll .right-chev { margin-right: 15px; }
.context-menu { position: absolute; left: 358px; top: 93px; width: 265px; font-size: 12px; background: linear-gradient(90deg, #fff 4px, #e9eef0 4px, #e9eef0 25px, #fafafa 25px); color: var(--ink); }
.context-menu a { display: block; height: 22px; padding-left: 34px; line-height: 22px; }
.context-menu .on { background: linear-gradient(#fff6d6, #ffe9a8 45%, #ffd455 50%, #ffdf85); border: 1px solid #ddb95c; border-width: 1px 0; line-height: 20px; }

.banner { position: absolute; right: 11px; top: 18px; width: 251px; height: 56px; border: 3px solid #fff; background: #f00; box-shadow: 0 2px 6px rgba(0, 0, 0, .5); color: #fff; font: bold 19px/50px "Liberation Serif", serif; text-align: center; }

/* step markers */
.steps { position: absolute; left: 0; top: 0; pointer-events: none; }
.boxes, .bubbles, .circles, .arrows { filter: drop-shadow(1px 2px 2px rgba(0, 0, 0, .4)); }
.boxes { fill: none; stroke: var(--green); stroke-width: 3; }
.bubbles { fill: #e4f3da; stroke: var(--green); stroke-width: 3; }
.arrows { fill: none; stroke: var(--green); stroke-width: 4; stroke-dasharray: 11 5; }
.arrows path { marker-end: url(#head); }
.circles { fill: var(--green); }
.numbers { fill: #fff; font: 22px "Liberation Sans", sans-serif; text-anchor: middle; }
.notes { fill: #4f9a1c; font: 15px "Liberation Serif", serif; text-anchor: middle; }
```
FILE: script.js
```js
// fills the three data grids
const orders = [
  ['5/7/2560', 'SO17070001', '1000000001~ลูกค้าราคาพิเศ..', '', 0],
  ['5/7/2560', 'SO17070002', '1000000001~ลูกค้าราคาพิเศ..', '', 0],
  ['5/7/2560', 'SO17070003', '1000000001~ลูกค้าราคาพิเศ..', '1,800.00', 1],
  ['5/7/2560', 'SO17070004', '1000000001~ลูกค้าราคาพิเศ..', '76,500.00', 1],
  ['6/7/2560', 'SO17070005', '1000000006~ร้านธรรมดา สัง..', '60,000.00', 1],
  ['13/7/2560', 'SO17070006', '1000000001~ลูกค้า', '105.00', 0],
  ['5/10/2560', 'SO17100001', '1000000001~ลูกค้า', '', 1],
  ['6/10/2560', 'SO17100002', '1000000001~ลูกค้า', '', 1],
  ['18/10/2560', 'SO17100003', '1000000001~ลูกค้า', '100.00', 1],
];

const items = [
  ['0001001', 'สินค้าหน่วยนับเดียว 001', 'PC(ชิ้น)', '89.00', ''],
  ['0001002', 'สินค้าหน่วยนับเดียว 002', 'PC(ชิ้น)', '98.00', '100.0..'],
  ['0001003', 'สินค้าหน่วยนับเดียว 003', 'PC(ชิ้น)', '103.0', ''],
  ['0001004', 'สินค้าหน่วยนับเดียว - สะสมแต้ม 01', 'PC(ชิ้น)', '', ''],
  ['0001005', 'สินค้าหน่วยนับเดียว - สะสมแต้ม 01', 'PC(ชิ้น)', '', ''],
  ['0001006', 'สินค้าหลายหน่วยนับ 001', 'PC(ชิ้น)', '', ''],
  ['0001007', 'สินค้าหลายหน่วยนับ 002', 'PC(ชิ้น)', '', ''],
  ['0001008', 'สินค้าชุด 001', 'ST(ชุด)', '', ''],
];

let html = '';
for (let i = 1; i <= 33; i++) {
  const o = orders[i - 1];
  const cls = i === 31 ? 'hot' : o && o[4] ? 'posted' : '';
  html += `<tr class="${cls}"><td>${i}</td>`;
  html += o
    ? `<td><input type="checkbox" aria-label="เลือก ${o[1]}"></td><td>${o[0]}</td><td>${o[1]}</td><td>${o[2]}</td><td class="num">${o[3]}</td></tr>`
    : '<td></td><td></td><td></td><td></td><td></td></tr>';
}
document.getElementById('list-rows').innerHTML = html;

html = items.map((r, i) =>
  `<tr><td>${i + 1}</td><td>${r[0]}</td><td>${r[1]}</td><td></td><td>${r[2]}</td><td class="num">${r[3]}</td><td></td><td></td><td>${r[4]}</td><td></td><td></td></tr>`
).join('');
document.getElementById('item-rows').innerHTML = html;

const first = ['ใบสั่งซื้อ/ใ..', 'BS171200..', '0001017', 'สินค้า Price std 001', '', 'B01~ค..', 'D01~ค..', 'PC~ชิ้น', '100.00', '105.00', '', '10,500.00'];
const total = ['', '', '', '', '', '', '', '', '100.00', '105.00', '', '10,500.00'];
html = '';
for (let i = 1; i <= 8; i++) {
  const data = i === 1 ? first : i === 8 ? total : Array(12).fill('');
  html += `<tr class="${i === 8 ? 'total' : ''}"><td>${i === 8 ? '' : i}</td>`;
  data.forEach((v, c) => {
    let cls = '';
    if (c === 3 || c > 7) cls += ' beige';
    if (c > 7) cls += ' num';
    if (i === 1 && ((c > 2 && c < 8) || c === 9)) cls += ' dim';
    html += `<td class="${cls}">${v}</td>`;
  });
  html += '</tr>';
}
document.getElementById('detail-rows').innerHTML = html;
```
